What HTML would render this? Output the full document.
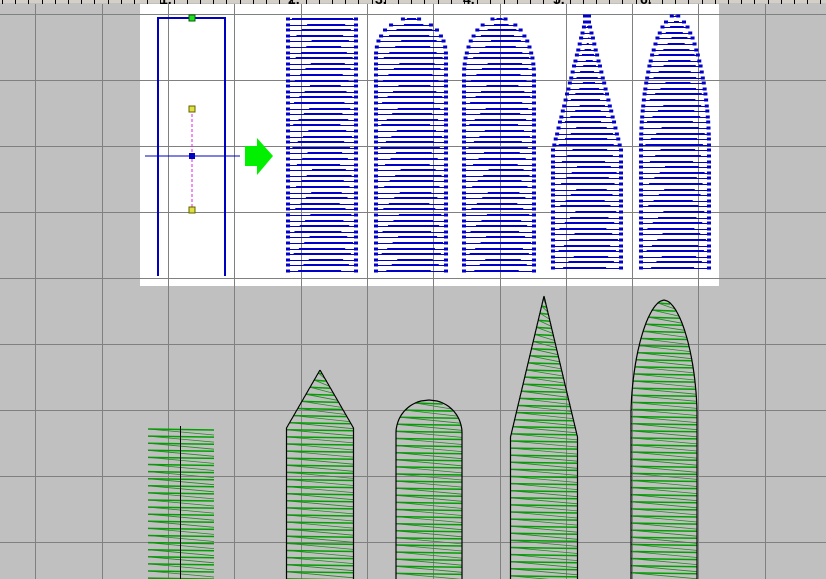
<!DOCTYPE html>
<html><head><meta charset="utf-8"><style>
html,body{margin:0;padding:0;background:#c0c0c0;width:826px;height:579px;overflow:hidden}
svg{display:block}
</style></head><body>
<svg id="s" width="826" height="579" xmlns="http://www.w3.org/2000/svg">
<rect width="826" height="579" fill="#c0c0c0"/>
<rect x="140" y="4" width="579" height="282" fill="#fff"/>
<g id="grid" stroke="#808080" stroke-width="1"></g>
<rect x="0" y="0" width="826" height="3" fill="#d4d0c8"/>
<g id="ruler" stroke="#000" stroke-width="1"></g>
<g font-family="Liberation Sans, sans-serif" font-size="14" font-weight="bold" fill="#000">
<text x="160" y="4">1.</text><text x="288" y="4">2.</text><text x="375" y="4">3.</text><text x="463" y="4">4.</text><text x="553" y="4">5.</text><text x="640" y="4">6.</text>
</g>
<g id="blue"></g>
<g id="green"></g>
<g>
<polyline points="158,276 158,18 225,18 225,276" fill="none" stroke="#0000c0" stroke-width="2"/>
<line x1="145" y1="156" x2="240" y2="156" stroke="#0000c0" stroke-width="1"/>
<line x1="192" y1="109" x2="192" y2="210" stroke="#e020e0" stroke-width="1" stroke-dasharray="3,2"/>
<rect x="189" y="15" width="6" height="6" fill="#20e020" stroke="#006000"/>
<rect x="189" y="106" width="6" height="6" fill="#e0e040" stroke="#606000"/>
<rect x="189" y="207" width="6" height="6" fill="#e0e040" stroke="#606000"/>
<rect x="189" y="153" width="6" height="6" fill="#0000c0"/>
<polygon points="245,146 257,146 257,138 273,156 257,175 257,166 245,166" fill="#00f000"/>
</g>
</svg>
<script>
var NS="http://www.w3.org/2000/svg";
function el(p,t,a){var e=document.createElementNS(NS,t);for(var k in a)e.setAttribute(k,a[k]);p.appendChild(e);return e;}
var g=document.getElementById('grid');
for(var k=-2;k<10;k++){var x=Math.round(168+66.3*k)+.5;el(g,'line',{x1:x,y1:4,x2:x,y2:579});}
for(var k=0;k<9;k++){var y=14+66*k+.5;el(g,'line',{x1:0,y1:y,x2:826,y2:y});}
var r=document.getElementById('ruler');
for(var x=2;x<826;x+=13.2){el(r,'line',{x1:Math.round(x)+.5,y1:0,x2:Math.round(x)+.5,y2:4});}
function prof(type,H,top,sh){return function(y){
 if(y>=sh)return H; if(y<top)return -1;
 var t=(sh-y)/(sh-top);
 if(type=='rect')return H;
 if(type=='point')return H*(1-t);
 if(type=='dome')return H*Math.sqrt(Math.max(0,1-t*t));
 if(type=='ogive')return H*Math.pow(Math.max(0,1-Math.pow(t,1.8)),0.55);
 return H;};}
var B=document.getElementById('blue');
var cols=[[322,34,18,272,'rect',18],[411,35,18,272,'dome',55],[499,35,18,272,'dome',75],[587,34,15,272,'point',150],[675,34,15,272,'ogive',145]];
cols.forEach(function(c,ci){
 var f=prof(c[4],c[1],c[2],c[5]);var i=0;
 for(var y=c[2]+1;y<=c[3];y+=5.6,i++){
  var h=f(y);if(h<2)h=2;var L=c[0]-h,R=c[0]+h;
  var yy=Math.round(y)+.5;
  var m1=L+((i*37)%50)/100*(R-L)*0.6+4, m2=R-((i*23)%40)/100*(R-L)*0.5-3;
  el(B,'line',{x1:L,y1:yy,x2:R,y2:yy,stroke:'#0000c8','stroke-width':1});
  el(B,'line',{x1:m1,y1:yy-1,x2:m2,y2:yy-1,stroke:'#0000c8','stroke-width':1});
  el(B,'rect',{x:L-2,y:yy-2,width:4,height:3,fill:'#0000c8'});
  el(B,'rect',{x:R-2,y:yy-2,width:4,height:3,fill:'#0000c8'});
 }
});
var G=document.getElementById('green');
var shapes=[[181,33,426,'rect',426],[320,33.5,370,'point',428],[429,33,400,'dome',433],[544,33.5,296,'point',437],[664,33,300,'ogive',415]];
shapes.forEach(function(s){
 var f=prof(s[3],s[1],s[2],s[4]);
 var left=[],right=[];
 for(var y=s[2];y<=580;y+=1){var h=f(y);if(h<0)h=0;left.push((s[0]-h).toFixed(1)+','+y);right.push((s[0]+h).toFixed(1)+','+y);}
 var outline=left.concat(right.reverse()).join(' ');
 for(var y=s[2]+3;y<=582;y+=7.1){
  var h1=f(y),h2=f(y+6);if(h1<0)continue;
  var L1=s[0]-h1,R1=s[0]+h1,L2=s[0]-h2,R2=s[0]+h2;
  el(G,'line',{x1:L1,y1:y,x2:R1,y2:y+1,stroke:'#00a000','stroke-width':1.5});
  el(G,'line',{x1:L1,y1:y,x2:R2,y2:y+6,stroke:'#208a20','stroke-width':0.8});
 }
 if(s[3]=='rect'){el(G,'line',{x1:180.5,y1:426,x2:180.5,y2:579,stroke:'#000','stroke-width':1});}
 else el(G,'polyline',{points:outline,fill:'none',stroke:'#000','stroke-width':1.2});
});
</script>
</body></html>
